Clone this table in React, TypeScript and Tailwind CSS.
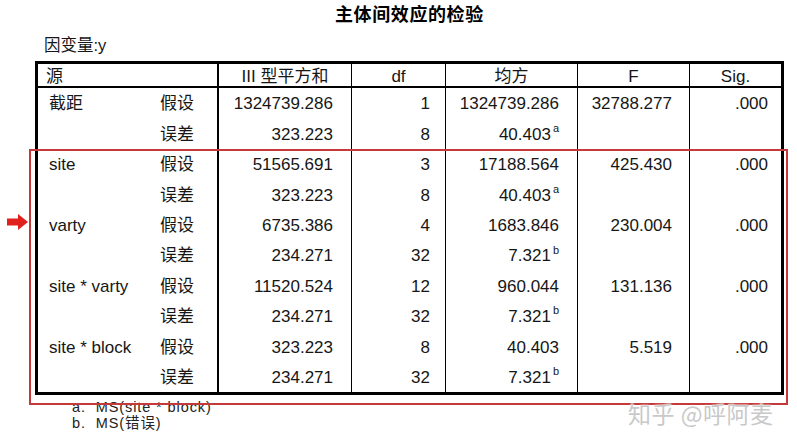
type Cell = { v: string; sup?: string };

const rows: { src: string; kind: string; ss: string; df: string; ms: Cell; f: string; sig: string }[] = [
  { src: '截距', kind: '假设', ss: '1324739.286', df: '1', ms: { v: '1324739.286' }, f: '32788.277', sig: '.000' },
  { src: '', kind: '误差', ss: '323.223', df: '8', ms: { v: '40.403', sup: 'a' }, f: '', sig: '' },
  { src: 'site', kind: '假设', ss: '51565.691', df: '3', ms: { v: '17188.564' }, f: '425.430', sig: '.000' },
  { src: '', kind: '误差', ss: '323.223', df: '8', ms: { v: '40.403', sup: 'a' }, f: '', sig: '' },
  { src: 'varty', kind: '假设', ss: '6735.386', df: '4', ms: { v: '1683.846' }, f: '230.004', sig: '.000' },
  { src: '', kind: '误差', ss: '234.271', df: '32', ms: { v: '7.321', sup: 'b' }, f: '', sig: '' },
  { src: 'site * varty', kind: '假设', ss: '11520.524', df: '12', ms: { v: '960.044' }, f: '131.136', sig: '.000' },
  { src: '', kind: '误差', ss: '234.271', df: '32', ms: { v: '7.321', sup: 'b' }, f: '', sig: '' },
  { src: 'site * block', kind: '假设', ss: '323.223', df: '8', ms: { v: '40.403' }, f: '5.519', sig: '.000' },
  { src: '', kind: '误差', ss: '234.271', df: '32', ms: { v: '7.321', sup: 'b' }, f: '', sig: '' },
];

const cols = 'grid grid-cols-[122px_59px_133px_94px_132px_112px_91px]';

export default function App() {
  return (
    <div className="relative w-[797px] h-[445px] overflow-hidden bg-white text-[#161616] font-['Liberation_Sans','Noto_Sans_CJK_SC',sans-serif]">
      {/* title */}
      <div className="h-[30px] flex items-center pl-[335px] text-[18px] font-bold tracking-[0.6px] text-black">
        主体间效应的检验
      </div>
      <div className="h-[31px] flex items-center pl-[44px] text-[16.5px]">因变量:y</div>

      {/* table */}
      <div className="ml-[35px] w-[749px] border-[3px] border-black text-[17px]">
        <div className={`${cols} h-[24px] border-b-2 border-black items-stretch`}>
          <div className="col-span-2 border-r-2 border-black pl-[8px] flex items-center">源</div>
          <div className="border-r border-black flex items-center justify-center">III 型平方和</div>
          <div className="border-r border-black flex items-center justify-center">df</div>
          <div className="border-r border-black flex items-center justify-center">均方</div>
          <div className="border-r border-black flex items-center justify-center">F</div>
          <div className="flex items-center justify-center">Sig.</div>
        </div>
        {rows.map((r, i) => (
          <div key={i} className={`${cols} h-[30.4px]`}>
            <div className="pl-[11px] pt-[2px] flex items-center whitespace-nowrap">{r.src}</div>
            <div className="border-r-2 border-black pt-[2px] flex items-center">{r.kind}</div>
            <div className="border-r border-black pt-[2px] flex items-center justify-end pr-[18px]">{r.ss}</div>
            <div className="border-r border-black pt-[2px] flex items-center justify-end pr-[15px]">{r.df}</div>
            <div className="border-r border-black pt-[2px] flex items-center justify-end pr-[18px]">
              <span>
                {r.ms.v}
                {r.ms.sup && <sup className="text-[11px] ml-[2px] top-[-0.7em]">{r.ms.sup}</sup>}
              </span>
            </div>
            <div className="border-r border-black pt-[2px] flex items-center justify-end pr-[17px]">{r.f}</div>
            <div className="pt-[2px] flex items-center justify-end pr-[13px]">{r.sig}</div>
          </div>
        ))}
      </div>

      {/* footnotes */}
      <div className="mt-[4px] pl-[72px] text-[14.5px] leading-[16px] tracking-[0.9px] text-[#222]">
        <div>a.&nbsp; MS(site * block)</div>
        <div>b.&nbsp; MS(错误)</div>
      </div>

      {/* annotation: red box + arrow */}
      <div className="absolute left-[29px] top-[149px] w-[759px] h-[256px] border-2 border-[#c43a3a] pointer-events-none" />
      <svg className="absolute left-[7px] top-[214px]" width="21" height="16" viewBox="0 0 21 16">
        <path d="M0 4.5 H11 V0 L21 8 L11 16 V11.5 H0 Z" fill="#e0201c" />
      </svg>

      {/* watermark */}
      <div className="absolute left-[628px] top-[399px] text-[23px] leading-[28px] text-[#c9c9c9] tracking-[0.5px] font-['Noto_Sans_CJK_SC',sans-serif] [text-shadow:0_0_2px_#fff,0_0_2px_#fff]">
        知乎 @呼阿麦
      </div>
    </div>
  );
}
